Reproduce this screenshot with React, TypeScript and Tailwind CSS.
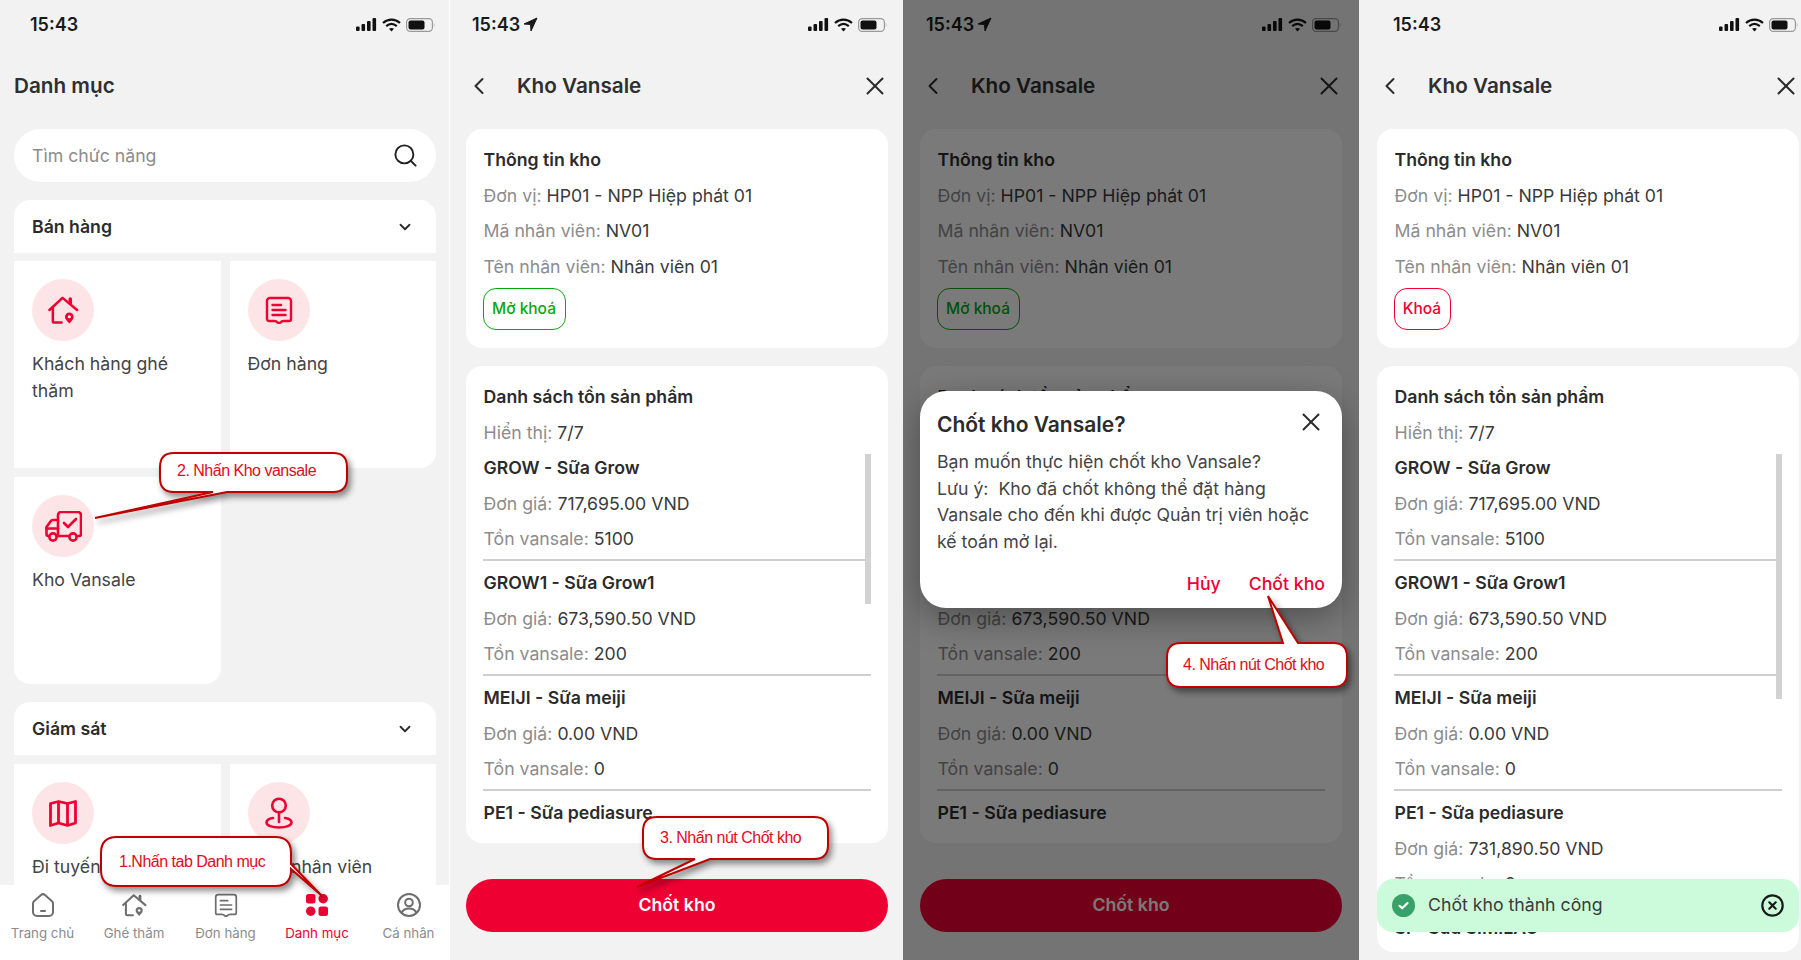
import { ChevronDown, ChevronLeft, Search, X } from "lucide-react";
import type { ReactNode } from "react";

const RED = "#ef0033";
const GRAY = "#6e6e6e";

const products = [
  { name: "GROW - Sữa Grow", price: "717,695.00 VND", stock: "5100" },
  { name: "GROW1 - Sữa Grow1", price: "673,590.50 VND", stock: "200" },
  { name: "MEIJI - Sữa meiji", price: "0.00 VND", stock: "0" },
  { name: "PE1 - Sữa pediasure", price: "731,890.50 VND", stock: "0" },
  { name: "SI - Sữa SIMILAC" },
];

function StatusBar({ located }: { located?: boolean }) {
  return (
    <div className={`flex h-[46px] items-center justify-between pr-[1px] pt-[3px] ${located ? "pl-[6px]" : "pl-[16px]"}`}>
      <div className="flex items-center gap-[3px] text-[18px] font-semibold text-[#1a1a1a]">
        <span>15:43</span>
        {located && (
          <svg width="15" height="15" viewBox="0 0 15 15">
            <path d="M14 1 L1 7 L7.5 7.5 L8 14 Z" fill="#1a1a1a" stroke="#1a1a1a" strokeWidth="1" strokeLinejoin="round" />
          </svg>
        )}
      </div>
      <div className="flex items-center gap-[5px]">
        <svg width="21" height="13" viewBox="0 0 21 13" fill="#111">
          <rect x="0" y="8.5" width="3.6" height="4.5" rx="1" />
          <rect x="5.5" y="6" width="3.6" height="7" rx="1" />
          <rect x="11" y="3" width="3.6" height="10" rx="1" />
          <rect x="16.5" y="0" width="3.6" height="13" rx="1" />
        </svg>
        <svg width="19" height="14" viewBox="0 0 19 14" fill="none" stroke="#111" strokeWidth="2.2">
          <path d="M1 5 C6 0.5 13 0.5 18 5" />
          <path d="M4.2 8.2 C7.5 5.4 11.5 5.4 14.8 8.2" />
          <path d="M9.5 13.5 L7 10.8 C8.5 9.8 10.5 9.8 12 10.8 Z" fill="#111" stroke="none" />
        </svg>
        <svg width="29" height="14" viewBox="0 0 29 14">
          <rect x="0.6" y="0.6" width="25.8" height="12.8" rx="3.6" fill="none" stroke="#9a9a9a" strokeWidth="1.2" />
          <rect x="2.5" y="2.5" width="16" height="9" rx="2" fill="#111" />
          <path d="M27.8 5 C28.6 5.4 28.6 8.6 27.8 9 Z" fill="#9a9a9a" />
        </svg>
      </div>
    </div>
  );
}

function HomePinIcon({ color, size }: { color: string; size: number }) {
  return (
    <svg width={size} height={size} viewBox="0 0 32 30" fill="none" stroke={color} strokeWidth="2.6" strokeLinecap="round" strokeLinejoin="round">
      <path d="M1.5 14.5 L15 2 L30 14.5" />
      <path d="M23 3 V7.5" strokeWidth="3.6" />
      <path d="M5 12 V26 a1.5 1.5 0 0 0 1.5 1.5 H14" />
      <path d="M22 28.5 C19 25.5 17.5 23.5 17.5 21.5 a4.5 4.5 0 0 1 9 0 C26.5 23.5 25 25.5 22 28.5 Z" fill={color} stroke="none" />
      <circle cx="22" cy="21.5" r="1.6" fill="#fff" stroke="none" />
    </svg>
  );
}

function ReceiptIcon({ color, size, sw = 2.4 }: { color: string; size: number; sw?: number }) {
  return (
    <svg width={size} height={size} viewBox="0 0 28 28" fill="none" stroke={color} strokeWidth={sw} strokeLinecap="round" strokeLinejoin="round">
      <path d="M2 5 a3 3 0 0 1 3-3 H23 a3 3 0 0 1 3 3 V23 a2 2 0 0 1-2 2 H19 Q16.5 25 15.5 26.5 Q14 27.5 12.5 26.5 Q11.5 25 9 25 H4 a2 2 0 0 1-2-2 Z" />
      <path d="M7.5 9 H16" />
      <path d="M7.5 14 H20.5" />
      <path d="M7.5 19 H20.5" />
    </svg>
  );
}

function TruckIcon() {
  return (
    <svg width="37" height="31" viewBox="0 0 37 31" fill="none" stroke={RED} strokeWidth="2.6" strokeLinecap="round" strokeLinejoin="round">
      <path d="M13 24 V4 a3 3 0 0 1 3-3 H33 a3 3 0 0 1 3 3 V23 a2 2 0 0 1-2 2 H33" />
      <path d="M19 12 L23 16 L31 8" />
      <path d="M13 9 H8 a3 3 0 0 0-2.5 1.4 L1.5 16 V23 a2 2 0 0 0 2 2 H4" />
      <path d="M1.5 17.5 H13" />
      <path d="M13 25 H23" />
      <circle cx="8" cy="26" r="3.6" />
      <circle cx="28" cy="26" r="3.6" />
    </svg>
  );
}

function MapIcon() {
  return (
    <svg width="28" height="27" viewBox="0 0 28 27" fill="none" stroke={RED} strokeWidth="2.8" strokeLinejoin="round">
      <path d="M1.5 3.5 L9.5 1.5 L18.5 3.5 L26.5 1.5 V23 L18.5 25.5 L9.5 23 L1.5 25.5 Z" />
      <path d="M9.5 1.5 V23" />
      <path d="M18.5 3.5 V25.5" />
    </svg>
  );
}

function PinRingIcon() {
  return (
    <svg width="28" height="32" viewBox="0 0 28 32" fill="none" stroke={RED} strokeWidth="2.6" strokeLinecap="round">
      <circle cx="14" cy="8.5" r="6.8" />
      <path d="M14 15.5 V25" />
      <path d="M8 21 C3.5 21.8 1.5 23.5 1.5 25.5 C1.5 28.5 7 30.5 14 30.5 C21 30.5 26.5 28.5 26.5 25.5 C26.5 23.5 24.5 21.8 20 21" />
    </svg>
  );
}

function SectionHeader({ title }: { title: string }) {
  return (
    <div className="flex h-[53px] items-center justify-between rounded-t-[16px] bg-white pl-[18px] pr-[22px]">
      <span className="pt-[1px] text-[17.7px] font-semibold text-[#2b2b2b]">{title}</span>
      <ChevronDown size={18} strokeWidth={2.4} className="text-[#2b2b2b]" />
    </div>
  );
}

function Tile({ icon, label, className }: { icon: ReactNode; label: string; className?: string }) {
  return (
    <div className={`h-[207px] bg-white pl-[18px] pr-[24px] pt-[18px] ${className ?? ""}`}>
      <div className="flex h-[62px] w-[62px] items-center justify-center rounded-full bg-[#fde5e7]">{icon}</div>
      <p className="mt-[9px] text-[17.7px] leading-[27px] text-[#444]">{label}</p>
    </div>
  );
}

function NavItem({ icon, label, active }: { icon: ReactNode; label: string; active?: boolean }) {
  return (
    <div className="flex w-[85px] flex-col items-center pt-[8px]">
      <div className="flex h-[24px] items-center justify-center">{icon}</div>
      <span className={`mt-[7px] whitespace-nowrap text-[13.3px] leading-[18px] ${active ? "text-[#ef0033]" : "text-[#8c8c8c]"}`}>{label}</span>
    </div>
  );
}

function MenuScreen() {
  return (
    <div className="flex h-[960px] w-[450px] shrink-0 flex-col border-r border-white bg-[#f2f2f2]">
      <div className="min-h-0 flex-1 overflow-hidden pl-[14px]">
        <div className="w-[422px]">
          <StatusBar />
          <div className="flex h-[83px] items-center pb-[3px] text-[20.7px] font-semibold text-[#2f2f2f]">Danh mục</div>
          <div className="flex h-[53px] items-center justify-between rounded-full bg-white pl-[18px] pr-[17px]">
            <span className="pt-[1px] text-[17.7px] text-[#8c8c8c]">Tìm chức năng</span>
            <Search size={27} strokeWidth={1.7} className="text-[#222]" />
          </div>
          <div className="mt-[18px]">
            <SectionHeader title="Bán hàng" />
            <div className="mt-[8px] grid grid-cols-2 gap-[9px]">
              <Tile icon={<HomePinIcon color={RED} size={31} />} label="Khách hàng ghé thăm" />
              <Tile icon={<ReceiptIcon color={RED} size={28} />} label="Đơn hàng" className="rounded-br-[16px]" />
              <Tile icon={<TruckIcon />} label="Kho Vansale" className="rounded-b-[16px]" />
            </div>
          </div>
          <div className="mt-[18px]">
            <SectionHeader title="Giám sát" />
            <div className="mt-[9px] grid grid-cols-2 gap-[9px]">
              <Tile icon={<MapIcon />} label="Đi tuyến" />
              <Tile icon={<PinRingIcon />} label="Vị trí nhân viên" />
            </div>
          </div>
        </div>
      </div>
      <div className="-mr-[2px] flex h-[75px] shrink-0 justify-between bg-white">
        <NavItem
          label="Trang chủ"
          icon={
            <svg width="24" height="24" viewBox="0 0 24 24" fill="none" stroke={GRAY} strokeWidth="2" strokeLinecap="round" strokeLinejoin="round">
              <path d="M2 10.5 a3 3 0 0 1 1-2.2 L10 2 a3 3 0 0 1 4 0 L21 8.3 a3 3 0 0 1 1 2.2 V19 a4 4 0 0 1-4 4 H6 a4 4 0 0 1-4-4 Z" />
              <path d="M10 18 H14" />
            </svg>
          }
        />
        <NavItem label="Ghé thăm" icon={<HomePinIcon color={GRAY} size={25} />} />
        <NavItem label="Đơn hàng" icon={<ReceiptIcon color={GRAY} size={24} sw={2} />} />
        <NavItem
          label="Danh mục"
          active
          icon={
            <svg width="22" height="22" viewBox="0 0 22 22" fill={RED}>
              <rect x="0" y="0" width="9.5" height="9.5" rx="2.5" />
              <circle cx="17.2" cy="4.75" r="4.75" />
              <circle cx="4.75" cy="17.2" r="4.75" />
              <rect x="12.5" y="12.5" width="9.5" height="9.5" rx="2.5" />
            </svg>
          }
        />
        <NavItem
          label="Cá nhân"
          icon={
            <svg width="24" height="24" viewBox="0 0 24 24" fill="none" stroke={GRAY} strokeWidth="2">
              <circle cx="12" cy="12" r="11" />
              <circle cx="12" cy="9.5" r="3.8" />
              <path d="M4.5 20 C6 16.5 9 15.5 12 15.5 C15 15.5 18 16.5 19.5 20" />
            </svg>
          }
        />
      </div>
    </div>
  );
}

function Row({ label, value }: { label: string; value: string }) {
  return (
    <p className="text-[17.7px] leading-[35.5px] text-[#8c8c8c]">
      {label} <span className="text-[#3a3a3a]">{value}</span>
    </p>
  );
}

function RowTitle({ children }: { children: ReactNode }) {
  return <p className="text-[17.7px] font-semibold leading-[35.5px] text-[#2b2b2b]">{children}</p>;
}

function StockScreen({
  width,
  offset,
  located,
  unlocked,
  short,
  listHeight,
  thumbHeight,
  children,
}: {
  width: string;
  offset: string;
  located?: boolean;
  unlocked?: boolean;
  short?: boolean;
  listHeight: string;
  thumbHeight: string;
  children?: ReactNode;
}) {
  const items = short ? products.slice(0, 4) : products;
  return (
    <div className={`relative h-[960px] shrink-0 overflow-hidden bg-[#f2f2f2] ${width} ${offset}`}>
      <div className="w-[422px]">
        <StatusBar located={located} />
        <div className="flex h-[83px] items-center pb-[3px]">
          <ChevronLeft size={28} strokeWidth={1.7} className="-ml-[1px] text-[#2b2b2b]" />
          <span className="ml-[24px] flex-1 text-[20.7px] font-semibold text-[#2f2f2f]">Kho Vansale</span>
          <X size={30} strokeWidth={1.6} className="-mr-[2px] text-[#2b2b2b]" />
        </div>
        <div className="rounded-[16px] bg-white pb-[18px] pl-[17.5px] pr-[17px] pt-[13px]">
          <RowTitle>Thông tin kho</RowTitle>
          <Row label="Đơn vị:" value="HP01 - NPP Hiệp phát 01" />
          <Row label="Mã nhân viên:" value="NV01" />
          <Row label="Tên nhân viên:" value="Nhân viên 01" />
          {unlocked ? (
            <div className="-ml-[1px] mt-[4px] flex h-[42px] w-[83px] items-center justify-center rounded-[13px] border border-[#0aa80a] text-[15.5px] font-medium text-[#0aa80a]">
              Mở khoá
            </div>
          ) : (
            <div className="-ml-[1px] mt-[4px] flex h-[42px] w-[57px] items-center justify-center rounded-[13px] border border-[#ef0033] text-[15.5px] font-medium text-[#ef0033]">
              Khoá
            </div>
          )}
        </div>
        <div className={`relative mt-[18px] overflow-hidden rounded-[16px] bg-white pl-[17.5px] pr-[17px] pt-[13px] ${listHeight}`}>
          <RowTitle>Danh sách tồn sản phẩm</RowTitle>
          <Row label="Hiển thị:" value="7/7" />
          {items.map((p, i) => (
            <div key={p.name}>
              <RowTitle>{p.name}</RowTitle>
              {p.price && !(short && i === 3) && (
                <>
                  <Row label="Đơn giá:" value={p.price} />
                  <Row label="Tồn vansale:" value={p.stock ?? ""} />
                  <div className="-ml-[1px] mb-[4.5px] mt-[2px] h-[2px] bg-[#cfcfcf]" />
                </>
              )}
            </div>
          ))}
          <div className={`absolute left-[399px] top-[88px] w-[6px] bg-[#d2d2d2] ${thumbHeight}`} />
        </div>
      </div>
      {children}
    </div>
  );
}

function ConfirmButton() {
  return (
    <div className="mt-[36px] flex h-[53px] w-[422px] items-center justify-center rounded-full bg-[#ef0033] text-[17.7px] font-semibold text-white">
      Chốt kho
    </div>
  );
}

const calloutText = "absolute text-[16px] leading-[20px] tracking-[-0.5px] text-[#e00b1c] [font-family:'Liberation_Sans',sans-serif]";

function Callouts() {
  return (
    <>
      <svg className="pointer-events-none absolute left-0 top-0 drop-shadow-[3px_4px_3px_rgba(0,0,0,0.45)]" width="1801" height="960" viewBox="0 0 1801 960" fill="#fff" stroke="#c00000" strokeWidth="2">
        <path d="M174 453 H333 Q347 453 347 467 V478 Q347 492 333 492 H227 L95 518 L213 492 H174 Q160 492 160 478 V467 Q160 453 174 453 Z" />
        <path d="M117 837 H275 Q291 837 291 853 V864 L322 896 L291 869 V870 Q291 886 275 886 H117 Q101 886 101 870 V853 Q101 837 117 837 Z" />
        <path d="M657 817 H814 Q828 817 828 831 V845 Q828 859 814 859 H710 L637 887 L695 859 H657 Q643 859 643 845 V831 Q643 817 657 817 Z" />
        <path d="M1181 643 H1283 L1268 596 L1298 643 H1333 Q1347 643 1347 657 V673 Q1347 687 1333 687 H1181 Q1167 687 1167 673 V657 Q1167 643 1181 643 Z" />
      </svg>
      <span className={`${calloutText} left-[177px] top-[461px]`}>2. Nhấn Kho vansale</span>
      <span className={`${calloutText} left-[119px] top-[852px]`}>1.Nhấn tab Danh mục</span>
      <span className={`${calloutText} left-[660px] top-[828px]`}>3. Nhấn nút Chốt kho</span>
      <span className={`${calloutText} left-[1183px] top-[655px]`}>4. Nhấn nút Chốt kho</span>
    </>
  );
}

export default function App() {
  return (
    <div className="relative flex h-[960px] w-[1801px] overflow-hidden [font-family:Inter,sans-serif]">
      <MenuScreen />

      <StockScreen width="w-[453px]" offset="pl-[16px]" located unlocked short listHeight="h-[477px]" thumbHeight="h-[150px]">
        <ConfirmButton />
      </StockScreen>

      <StockScreen width="w-[456px]" offset="pl-[17px]" located unlocked short listHeight="h-[477px]" thumbHeight="h-0">
        <ConfirmButton />
        {/* dim layer + dialog */}
        <div className="absolute inset-0 bg-black/[0.52]" />
        <div className="absolute left-[17px] top-[391px] h-[217px] w-[422px] rounded-[26px] bg-white pl-[17px] pr-[18px] pt-[18px] shadow-[0_10px_34px_rgba(0,0,0,0.35)]">
          <div className="flex h-[30px] items-center justify-between">
            <span className="pt-[1px] text-[21px] font-semibold text-[#2b2b2b]">Chốt kho Vansale?</span>
            <X size={30} strokeWidth={1.6} className="-mr-[2px] -mt-[4px] text-[#2b2b2b]" />
          </div>
          <p className="mt-[10px] whitespace-nowrap text-[17.7px] leading-[26.6px] text-[#444]">
            Bạn muốn thực hiện chốt kho Vansale?
            <br />
            Lưu ý:&nbsp; Kho đã chốt không thể đặt hàng
            <br />
            Vansale cho đến khi được Quản trị viên hoặc
            <br />
            kế toán mở lại.
          </p>
          <div className="-mr-[1px] mt-[16px] flex justify-end gap-[28px] text-[17.7px] font-medium leading-[26px] text-[#ef0033]">
            <span>Hủy</span>
            <span>Chốt kho</span>
          </div>
        </div>
      </StockScreen>

      <StockScreen width="w-[442px]" offset="pl-[18px]" listHeight="h-[586px]" thumbHeight="h-[245px]">
        {/* success toast */}
        <div className="absolute left-[18px] top-[879px] flex h-[53px] w-[422px] items-center justify-between rounded-[16px] bg-[#ccfbdc] pl-[15px] pr-[15px]">
          <div className="flex items-center gap-[13px]">
            <svg width="23" height="23" viewBox="0 0 23 23">
              <circle cx="11.5" cy="11.5" r="11.5" fill="#38a169" />
              <path d="M7.5 11.8 L10.2 14.3 L15.5 9" fill="none" stroke="#fff" strokeWidth="2.2" strokeLinecap="round" strokeLinejoin="round" />
            </svg>
            <span className="text-[17.7px] text-[#3a3a3a]">Chốt kho thành công</span>
          </div>
          <svg width="23" height="23" viewBox="0 0 23 23" fill="none" stroke="#1a1a1a" strokeWidth="2.2" strokeLinecap="round">
            <circle cx="11.5" cy="11.5" r="10.2" />
            <path d="M8.3 8.3 L14.7 14.7" />
            <path d="M14.7 8.3 L8.3 14.7" />
          </svg>
        </div>
      </StockScreen>

      <Callouts />
    </div>
  );
}
